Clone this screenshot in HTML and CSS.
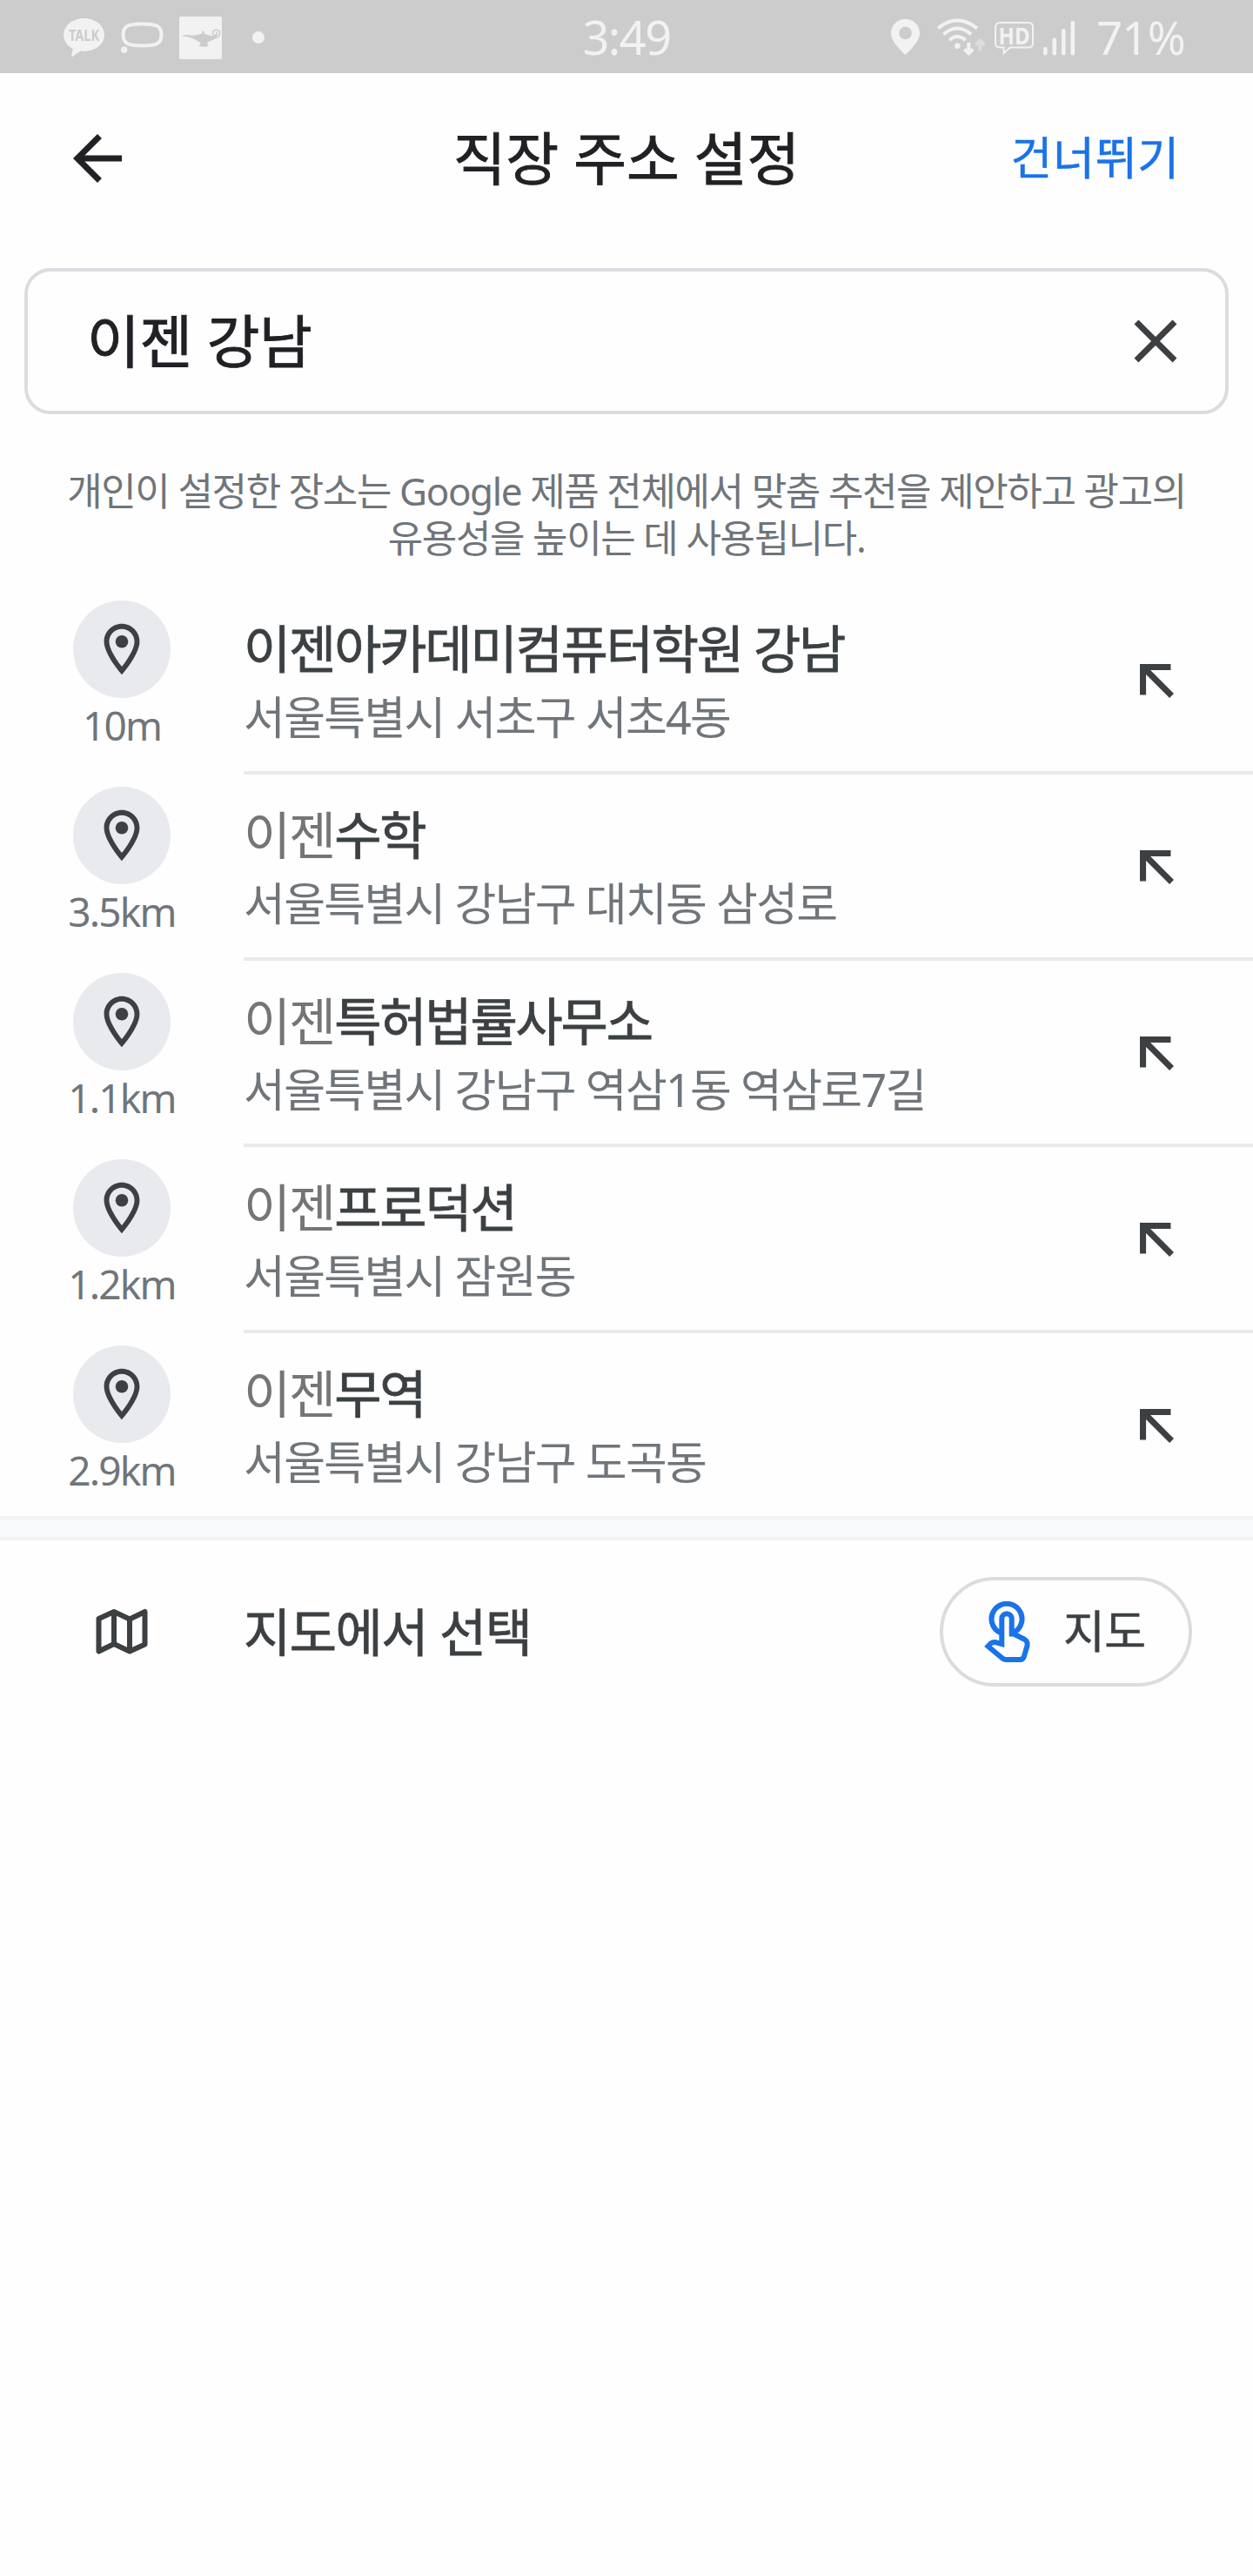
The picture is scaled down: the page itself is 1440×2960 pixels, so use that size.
FILE: index.html
```html
<!DOCTYPE html>
<html lang="ko">
<head>
<meta charset="utf-8">
<title>직장 주소 설정</title>
<link rel="stylesheet" href="styles.css">
</head>
<body>
<svg width="0" height="0" class="defs" aria-hidden="true">
  <symbol id="pin" viewBox="0 0 24 24"><path d="M12 2C8.13 2 5 5.13 5 9c0 5.25 7 13 7 13s7-7.75 7-13c0-3.87-3.13-7-7-7zM7 9c0-2.76 2.24-5 5-5s5 2.240 5 5c0 2.880-2.880 7.190-5 9.880C9.920 16.210 7 11.850 7 9z"/><circle cx="12" cy="9" r="2.5"/></symbol>
  <symbol id="fill-arrow" viewBox="0 0 11 11"><path d="M0 0h10v2H3.410L11 9.600 9.600 11 2 3.410V10H0z"/></symbol>
</svg>

<header class="status">
  <div class="status-left">
    <svg class="talk" width="47" height="84" viewBox="73 0 47 84"><ellipse cx="96.500" cy="40" rx="23.500" ry="19"/><path d="M84 54L82 64.500Q82.500 65.500 84 64.500L94 57.500z"/><text x="79" y="47" textLength="35" lengthAdjust="spacingAndGlyphs">TALK</text></svg>
    <svg class="bubble" width="49" height="84" viewBox="139 0 49 84"><path class="line" d="M163.500 27.500C179 27.500 185.500 29.500 185.500 40S179 52.500 163.500 52.500 141.500 50.500 141.500 40 148 27.500 163.500 27.500z"/><circle cx="142.700" cy="57.300" r="3.700"/></svg>
    <svg class="lamp" width="49" height="84" viewBox="206 0 49 84"><rect x="206" y="19" width="49" height="49" rx="2"/><path class="cut" d="M209 41.500Q210 40 215 40Q223 41.500 229 39.500L232.500 38.500Q231.500 36.500 233.500 35Q235.500 36.500 234.500 38.500Q239 40.500 243 41Q248 41.500 250 40.500Q250 44 243 46.500Q238 48.500 238 49.500Q239.500 52 239 53Q234 54.500 229 53Q228.500 52 230.500 50Q230 48.500 227 47Q219 42 209 41.500z"/><path class="curl" d="M247 43.500C251 43 253 40.500 252.500 37.500C252 34 247 33 245 36C243.500 38.500 245.500 41 248 40.500C250 40 250 37 248 37.300"/></svg>
    <svg class="dot" width="14" height="84" viewBox="290 0 14 84"><circle cx="297" cy="43" r="7"/></svg>
  </div>
  <div class="time">3:49</div>
  <div class="status-right">
    <svg width="33" height="84" viewBox="1024 0 33 84"><path fill-rule="evenodd" d="M1040.500 22C1031 22 1024 29 1024 38.500C1024 49 1040.500 63 1040.500 63S1057 49 1057 38.500C1057 29 1050 22 1040.500 22zM1040.500 30.700a7.300 7.300 0 1 1 0 14.600a7.300 7.300 0 1 1 0-14.600z"/></svg>
    <svg class="wifi" width="56" height="84" viewBox="1077 0 56 84"><g class="line"><path d="M1078 32.500Q1100 14.500 1123 32.500"/><path d="M1084.500 39.500Q1100 25.500 1116 39.500"/><path d="M1091 46Q1100 38 1109.500 46"/></g><circle cx="1100.300" cy="52.800" r="3.200"/><path class="line" d="M1113.300 49V61M1108.500 56.500L1113.300 61.300L1118.100 56.500"/><path class="line dim" d="M1126.500 58.500V46M1121.500 51.500L1126.500 46.500L1131.500 51.500"/></svg>
    <svg class="hd" width="46" height="84" viewBox="1143 0 46 84"><path class="thin" d="M1150 26H1181.500Q1187 26 1187 31V50Q1187 54.500 1181.500 54.500H1161L1153.500 61V54.500H1150Q1144 54.500 1144 50V31Q1144 26 1150 26z"/><text x="1147.500" y="50.500" textLength="36" lengthAdjust="spacingAndGlyphs">HD</text></svg>
    <svg width="38" height="84" viewBox="1198 0 38 84"><rect x="1199" y="54" width="4.600" height="9.500" rx="2"/><rect x="1209.500" y="43.500" width="4.600" height="20" rx="2"/><rect x="1220" y="33" width="4.600" height="30.500" rx="2"/><rect x="1230.500" y="24" width="4.600" height="39.500" rx="2"/></svg>
    <span class="battery">71%</span>
  </div>
</header>

<nav class="appbar">
  <svg class="back" viewBox="0 0 24 24"><path d="M20 11H7.830l5.590-5.590L12 4l-8 8 8 8 1.410-1.410L7.830 13H20v-2z"/></svg>
  <h1 class="title">직장 주소 설정</h1>
  <a class="skip">건너뛰기</a>
</nav>

<div class="search">
  <span class="query">이젠 강남</span>
  <svg class="clear" viewBox="0 0 24 24"><path d="M19 6.410L17.590 5 12 10.590 6.410 5 5 6.410 10.590 12 5 17.590 6.410 19 12 13.410 17.590 19 19 17.590 13.410 12z"/></svg>
</div>

<p class="hint">개인이 설정한 장소는 Google 제품 전체에서 맞춤 추천을 제안하고 광고의<br>유용성을 높이는 데 사용됩니다.</p>

<ul class="results">
  <li class="row">
    <div class="where"><span class="badge"><svg class="pin"><use href="#pin"/></svg></span><span class="dist">10m</span></div>
    <div class="body"><div class="text"><div class="name">이젠아카데미컴퓨터학원 강남</div><div class="addr">서울특별시 서초구 서초4동</div></div><svg class="fill"><use href="#fill-arrow"/></svg></div>
  </li>
  <li class="row">
    <div class="where"><span class="badge"><svg class="pin"><use href="#pin"/></svg></span><span class="dist">3.5km</span></div>
    <div class="body"><div class="text"><div class="name"><span class="match">이젠</span>수학</div><div class="addr">서울특별시 강남구 대치동 삼성로</div></div><svg class="fill"><use href="#fill-arrow"/></svg></div>
  </li>
  <li class="row">
    <div class="where"><span class="badge"><svg class="pin"><use href="#pin"/></svg></span><span class="dist">1.1km</span></div>
    <div class="body"><div class="text"><div class="name"><span class="match">이젠</span>특허법률사무소</div><div class="addr">서울특별시 강남구 역삼1동 역삼로7길</div></div><svg class="fill"><use href="#fill-arrow"/></svg></div>
  </li>
  <li class="row">
    <div class="where"><span class="badge"><svg class="pin"><use href="#pin"/></svg></span><span class="dist">1.2km</span></div>
    <div class="body"><div class="text"><div class="name"><span class="match">이젠</span>프로덕션</div><div class="addr">서울특별시 잠원동</div></div><svg class="fill"><use href="#fill-arrow"/></svg></div>
  </li>
  <li class="row">
    <div class="where"><span class="badge"><svg class="pin"><use href="#pin"/></svg></span><span class="dist">2.9km</span></div>
    <div class="body"><div class="text"><div class="name"><span class="match">이젠</span>무역</div><div class="addr">서울특별시 강남구 도곡동</div></div><svg class="fill"><use href="#fill-arrow"/></svg></div>
  </li>
</ul>

<div class="band"></div>

<div class="pick">
  <div class="pick-icon"><svg class="map" viewBox="0 0 60 54"><path d="M3.500 12L21 4L39 12.500L56.500 4V41.500L39 49.500L21 41L3.500 49.500zM21 4V41M39 12.500V49.500"/></svg></div>
  <span class="pick-label">지도에서 선택</span>
  <button class="map-btn">
    <svg class="touch" viewBox="0 0 54 70"><path d="M19 36.300A17.500 17.500 0 1 1 33 36.300"/><path d="M20.300 49V20a5.700 5.700 0 0 1 11.400 0V37.500H34L46 43.500Q50.500 46 49.500 51L46 63Q45 67 41 67H25Q23 67 21 65.500L4.500 51.700L7.500 48.500Q10 46.500 14 47.300z"/></svg>
    <span class="map-text">지도</span>
  </button>
</div>
</body>
</html>
```
FILE: styles.css
```css
* { box-sizing: border-box; }

body {
  margin: 0;
  min-height: 2960px;
  background: #fefefe;
  color: #202124;
  font-family: "Noto Sans", "Noto Sans CJK KR", sans-serif;
}

svg { display: block; flex: none; }
.defs { position: absolute; }

/* status bar */
.status {
  display: grid;
  grid-template-columns: 1fr auto 1fr;
  height: 84px;
  background: #ccc;
  color: #f2f2f2;
  fill: #f2f2f2;
}
.status-left { display: flex; padding-left: 73px; }
.bubble { margin-left: 19px; }
.lamp { margin-left: 18px; }
.dot { margin-left: 35px; }
.status .line { fill: none; stroke: #f2f2f2; stroke-width: 4; }
.status .dim { stroke: #ddd; }
.thin { fill: none; stroke: #f2f2f2; stroke-width: 2; }
.cut { fill: #ccc; }
.curl { fill: none; stroke: #ccc; stroke-width: 1.600; }
.talk text { font: 700 17px "Noto Sans", sans-serif; fill: #ccc; }
.hd text { font: 700 27px "Noto Sans", sans-serif; }
.time { font-size: 54px; line-height: 84px; letter-spacing: -1.500px; }
.status-right { display: flex; justify-content: flex-end; padding-right: 78px; }
.wifi { margin-left: 20px; }
.hd { margin-left: 10px; margin-right: 9px; }
.battery { width: 102px; margin-left: 24px; font-size: 53px; line-height: 86px; letter-spacing: -1px; white-space: nowrap; }

/* app bar */
.appbar {
  display: grid;
  grid-template-columns: 1fr auto 1fr;
  align-items: center;
  height: 196px;
  padding: 0 84px 0 70px;
}
.back { width: 84px; height: 84px; fill: #202124; }
.title { margin: 0 0 3px 14px; font-size: 66px; font-weight: 400; line-height: 90px; -webkit-text-stroke: 0.900px; }
.skip { justify-self: end; margin-bottom: 3px; color: #1a73e8; font-size: 52px; line-height: 80px; letter-spacing: 0.800px; -webkit-text-stroke: 0.500px; }

/* search box */
.search {
  display: flex;
  align-items: center;
  justify-content: space-between;
  height: 168px;
  margin: 28px 28px 0;
  padding: 0 38px 0 68px;
  border: 4px solid #dadce0;
  border-radius: 30px;
}
.query { margin-bottom: 3px; font-size: 66px; line-height: 90px; letter-spacing: -0.300px; -webkit-text-stroke: 0.900px; }
.clear { width: 84px; height: 84px; fill: #3c4043; }

.hint {
  height: 139px;
  margin: 61px 0 0;
  color: #70757a;
  font-size: 44px;
  line-height: 54px;
  letter-spacing: -1.400px;
  text-align: center;
  white-space: nowrap;
}

/* results */
.results { margin: 0; padding: 0; list-style: none; }
.row { display: flex; height: 214px; }
.row:last-child { height: 210px; }
.where { display: flex; flex-direction: column; align-items: center; width: 280px; padding-top: 14px; }
.badge { display: flex; align-items: center; justify-content: center; width: 112px; height: 112px; border-radius: 50%; background: #e8eaed; }
.pin { width: 70px; height: 70px; fill: #3c4043; }
.dist { margin-top: 6px; color: #70757a; font-size: 46px; line-height: 50px; letter-spacing: -1.800px; }
.body { display: flex; flex: 1; justify-content: space-between; padding-right: 91px; border-bottom: 4px solid #e8eaed; }
.row:last-child .body { border-bottom: 0; }
.text { padding-top: 30px; white-space: nowrap; }
.name { color: #3c4043; font-size: 59px; line-height: 78px; letter-spacing: -2.200px; -webkit-text-stroke: 0.800px; }
.match { color: #757575; -webkit-text-stroke: 0; }
.addr { margin-top: 1px; color: #70757a; font-size: 52px; line-height: 78px; letter-spacing: -1.700px; }
.fill { width: 39px; height: 39px; margin-top: 87px; fill: #3c4043; }

.band { height: 28px; border: solid #f1f3f4; border-width: 4px 0; background: #f8f9fb; }

/* choose on map */
.pick { display: flex; align-items: center; height: 210px; padding-right: 70px; }
.pick-icon { display: flex; justify-content: center; width: 280px; }
.map { width: 60px; height: 54px; fill: none; stroke: #3c4043; stroke-width: 6; stroke-linejoin: round; }
.pick-label { flex: 1; color: #3c4043; font-size: 59px; line-height: 78px; letter-spacing: -1.500px; -webkit-text-stroke: 0.800px; }
.map-btn {
  display: flex;
  align-items: center;
  width: 290px;
  height: 126px;
  padding: 0 0 0 47px;
  border: 4px solid #dadce0;
  border-radius: 63px;
  background: none;
  font-family: inherit;
}
.touch { width: 54px; height: 70px; fill: none; stroke: #1a73e8; stroke-width: 6; }
.map-text { margin: 0 0 3px 37px; color: #3c4043; font-size: 52px; line-height: 78px; letter-spacing: -0.500px; -webkit-text-stroke: 0.500px; }
```
